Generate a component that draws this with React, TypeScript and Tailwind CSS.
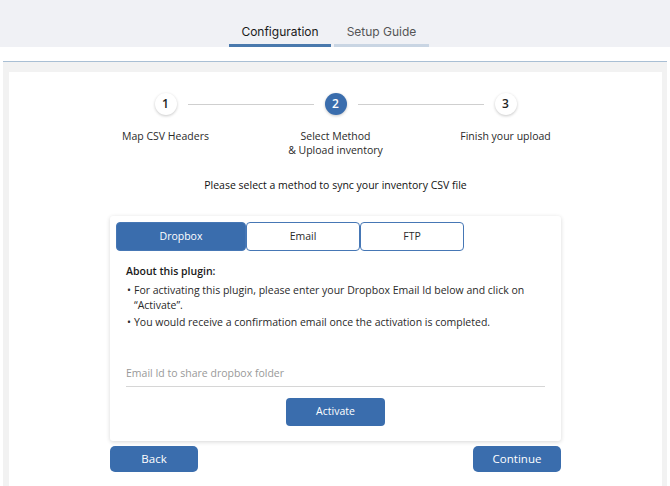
import React, { useState } from 'react';

// Step indicator circle
const StepDot: React.FC<{ n: number; active?: boolean }> = ({ n, active }) => (
  <div
    className={`w-[22px] h-[22px] rounded-full flex items-center justify-center text-[12px] font-semibold shadow-[0_1px_3px_rgba(0,0,0,0.22)] ${
      active ? 'bg-[#3a6dad] text-white' : 'bg-white text-[#222]'
    }`}
  >
    {n}
  </div>
);

const methods = [
  { id: 'dropbox', label: 'Dropbox', w: 'w-[130px]' },
  { id: 'email', label: 'Email', w: 'w-[114px]' },
  { id: 'ftp', label: 'FTP', w: 'w-[104px]' },
];

const App: React.FC = () => {
  const [method, setMethod] = useState('dropbox');
  const [email, setEmail] = useState('');

  return (
    <div className="w-[670px] h-[486px] overflow-hidden bg-white font-['Open_Sans',sans-serif] text-[#2a2a2a]">
      {/* Top tabs */}
      <div className="h-[47px] bg-[#f0f1f5] flex items-end justify-center pr-[12px] font-['Inter','Liberation_Sans',sans-serif] text-[12px]">
        <div className="w-[102px] h-[47px] flex flex-col items-center justify-end">
          <span className="text-[#1a1a1a] pb-[3px]">Configuration</span>
          <div className="w-full h-[3px] bg-[#4a79ad]" />
        </div>
        <div className="w-[95px] ml-[3px] h-[47px] flex flex-col items-center justify-end">
          <span className="text-[#555] pb-[3px]">Setup Guide</span>
          <div className="w-full h-[3px] bg-[#c9d5e3]" />
        </div>
      </div>

      <div className="h-[14px]" />

      {/* Main panel */}
      <div className="mx-[3px] border-t border-[#a9bfd4] bg-[#f2f2f2] pl-[6px] pr-[5px] pt-[10px] h-[425px]">
        <div className="bg-white h-full pt-[21px]">
          {/* Stepper */}
          <div className="w-[362px] mx-auto flex items-center">
            <StepDot n={1} />
            <div className="flex-1 mx-[11px] h-px bg-[#cfcfcf]" />
            <StepDot n={2} active />
            <div className="flex-1 mx-[11px] h-px bg-[#cfcfcf]" />
            <StepDot n={3} />
          </div>
          <div className="w-[510px] mx-auto grid grid-cols-3 text-center text-[10.5px] leading-[14px] mt-[14px] text-[#2a2a2a]">
            <div>Map CSV Headers</div>
            <div>
              Select Method
              <br />& Upload inventory
            </div>
            <div>Finish your upload</div>
          </div>

          <p className="text-center text-[10.5px] font-medium text-[#111] mt-[21px] leading-[14px]">
            Please select a method to sync your inventory CSV file
          </p>

          {/* Method card */}
          <div className="w-[451px] mx-auto mt-[24px] bg-white rounded-[3px] shadow-[0_1px_4px_rgba(0,0,0,0.16)] p-[6px] pb-[15px]">
            <div className="flex">
              {methods.map(m => (
                <button
                  key={m.id}
                  onClick={() => setMethod(m.id)}
                  className={`${m.w} h-[29px] rounded-[4px] border border-[#4677b5] text-[10.5px] ${
                    method === m.id ? 'bg-[#3a6dad] text-white' : 'bg-white text-[#2a2a2a]'
                  }`}
                >
                  {m.label}
                </button>
              ))}
            </div>

            <div className="px-[10px] mt-[13px] text-[10.5px] leading-[15.5px]">
              <p className="font-semibold text-[#1a1a1a]">About this plugin:</p>
              <ul className="mt-[3px]">
                <li className="flex">
                  <span className="w-[8px] shrink-0 pl-[1px]">•</span>
                  <span>
                    For activating this plugin, please enter your Dropbox Email Id below and click on
                    “Activate”.
                  </span>
                </li>
                <li className="flex mt-[1px]">
                  <span className="w-[8px] shrink-0 pl-[1px]">•</span>
                  <span>You would receive a confirmation email once the activation is completed.</span>
                </li>
              </ul>

              <input
                value={email}
                onChange={e => setEmail(e.target.value)}
                placeholder="Email Id to share dropbox folder"
                className="mt-[36px] w-full border-b border-[#d6d6d6] pb-[4px] text-[10.5px] outline-none placeholder:text-[#999]"
              />

              <div className="flex justify-center mt-[11px]">
                <button className="w-[99px] h-[28px] rounded-[4px] bg-[#3a6dad] text-white text-[10.5px]">
                  Activate
                </button>
              </div>
            </div>
          </div>

          {/* Footer nav */}
          <div className="w-[451px] mx-auto mt-[5px] flex justify-between">
            <button className="w-[88px] h-[26px] rounded-[5px] bg-[#3a6dad] text-white text-[11.5px]">Back</button>
            <button className="w-[88px] h-[26px] rounded-[5px] bg-[#3a6dad] text-white text-[11.5px]">Continue</button>
          </div>
        </div>
      </div>
    </div>
  );
};

export default App;
